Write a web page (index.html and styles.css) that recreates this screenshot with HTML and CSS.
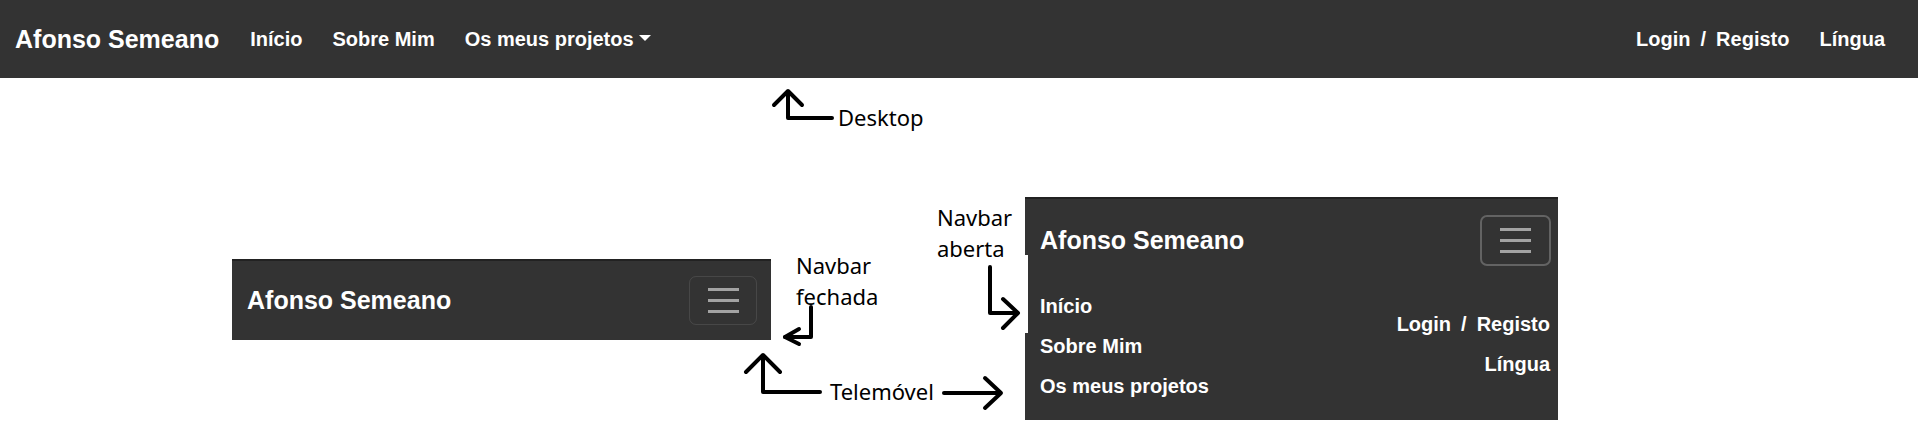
FILE: index.html
```html
<!DOCTYPE html>
<html lang="pt">
<head>
<meta charset="utf-8">
<title>Navbar</title>
<link rel="stylesheet" href="styles.css">
</head>
<body>
<nav class="topbar">
  <span class="brand">Afonso Semeano</span>
  <ul class="links">
    <li>Início</li>
    <li>Sobre Mim</li>
    <li class="dropdown">Os meus projetos</li>
  </ul>
  <div class="right">
    <div class="auth"><span>Login</span><span class="sep">/</span><span>Registo</span></div>
    <span class="lang">Língua</span>
  </div>
</nav>

<main class="canvas">
  <div class="label desktop">Desktop</div>

  <div class="phone closed">
    <span class="brand">Afonso Semeano</span>
    <button class="toggler">
      <svg width="31" height="25" viewBox="0 0 31 25"><path d="M0 1.5H31M0 12.5H31M0 23.5H31" stroke="#a3a3a3" stroke-width="3"/></svg>
    </button>
  </div>

  <div class="label fechada">Navbar<br>fechada</div>
  <div class="label aberta">Navbar<br>aberta</div>
  <div class="label telemovel">Telemóvel</div>

  <div class="phone open">
    <div class="head">
      <span class="brand">Afonso Semeano</span>
      <button class="toggler focus">
        <svg width="31" height="25" viewBox="0 0 31 25"><path d="M0 1.5H31M0 12.5H31M0 23.5H31" stroke="#a3a3a3" stroke-width="3"/></svg>
      </button>
    </div>
    <div class="body">
      <ul class="col">
        <li>Início</li>
        <li>Sobre Mim</li>
        <li>Os meus projetos</li>
      </ul>
      <div class="col rcol">
        <div class="auth"><span>Login</span><span class="sep">/</span><span>Registo</span></div>
        <div>Língua</div>
      </div>
    </div>
  </div>
  <div class="notch"></div>

  <svg class="arrows" width="1918" height="351" viewBox="0 78 1918 351">
    <g fill="none" stroke="#000" stroke-width="4" stroke-linecap="round" stroke-linejoin="round">
      <polyline points="832,118 788,118 788,92"/>
      <polyline points="774,105 788,91 802,105"/>
      <polyline points="811,307 811,337 785,337"/>
      <polyline points="799,329 785,337 799,344"/>
      <polyline points="820,392 763,392 763,356"/>
      <polyline points="746,372 763,355 780,372"/>
      <line x1="944" y1="393" x2="1000" y2="393"/>
      <polyline points="985,378 1001,393 985,408"/>
      <polyline points="990,267 990,313 1017,313"/>
      <polyline points="1003,299 1018,313 1003,328"/>
    </g>
  </svg>
</main>
</body>
</html>
```

FILE: styles.css
```css
* { box-sizing: border-box; }

html, body {
  margin: 0;
  padding: 0;
  background: #fff;
}

body {
  width: 1918px;
  height: 429px;
  overflow: hidden;
  font-family: "Liberation Sans", Arial, sans-serif;
  font-weight: bold;
  color: #fff;
}

ul { list-style: none; margin: 0; padding: 0; }

.topbar {
  height: 78px;
  background: #333;
  display: flex;
  align-items: center;
  padding: 0 18px 0 15px;
  font-size: 20px;
}

.brand {
  font-size: 25px;
  white-space: nowrap;
}

.topbar .brand { margin-right: 16px; }

.links {
  display: flex;
  align-items: center;
}

.links li { padding: 0 15px; white-space: nowrap; }

.dropdown::after {
  content: "";
  display: inline-block;
  margin-left: 5px;
  vertical-align: 5px;
  border-top: 6px solid #fff;
  border-left: 6px solid transparent;
  border-right: 6px solid transparent;
}

.right {
  margin-left: auto;
  display: flex;
  align-items: center;
}

.auth {
  display: flex;
  align-items: center;
  justify-content: flex-end;
}

.right .auth { padding-left: 15px; padding-right: 15px; }

.sep { margin: 0 10px; }

.lang { padding: 0 15px; }

.canvas {
  position: relative;
  height: 351px;
}

.label {
  position: absolute;
  font-family: "Noto Sans", "Open Sans", sans-serif;
  font-weight: normal;
  font-size: 22px;
  line-height: 31px;
  color: #000;
  white-space: nowrap;
}

.desktop { left: 838px; top: 24px; }
.fechada { left: 796px; top: 172px; }
.aberta { left: 937px; top: 124px; }
.telemovel { left: 830px; top: 298px; }

.phone {
  position: absolute;
  background: #333;
  border-top: 2px solid #222;
}

.closed {
  left: 232px;
  top: 181px;
  width: 539px;
  height: 81px;
  display: flex;
  align-items: center;
  justify-content: space-between;
  padding: 0 14px 0 15px;
}

.toggler {
  width: 68px;
  height: 49px;
  padding: 0;
  background: transparent;
  border: 1px solid rgba(255, 255, 255, 0.1);
  border-radius: 7px;
  display: flex;
  align-items: center;
  justify-content: center;
}

.toggler.focus {
  width: 71px;
  height: 51px;
  border: 2px solid #636363;
}

.open {
  left: 1025px;
  top: 119px;
  width: 533px;
  height: 223px;
  display: flex;
  flex-direction: column;
  font-size: 20px;
}

.open .head {
  height: 82px;
  display: flex;
  align-items: center;
  justify-content: space-between;
  padding: 0 7px 0 15px;
}

.open .body {
  display: flex;
  justify-content: space-between;
  align-items: center;
  padding: 5px 8px 14px 15px;
}

.col > * { line-height: 40px; white-space: nowrap; }

.rcol {
  text-align: right;
  padding-bottom: 4px;
}

.notch {
  position: absolute;
  left: 1025px;
  top: 177px;
  width: 3px;
  height: 78px;
  background: #fff;
}

.arrows {
  position: absolute;
  left: 0;
  top: 0;
  pointer-events: none;
}
```
